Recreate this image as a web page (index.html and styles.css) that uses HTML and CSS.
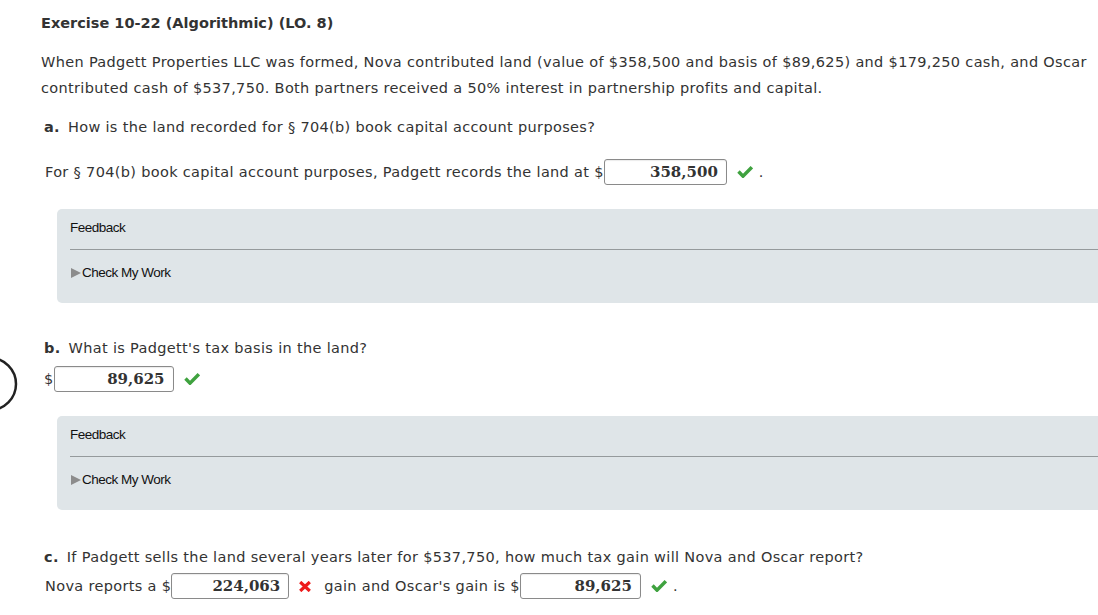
FILE: index.html
```html
<!DOCTYPE html>
<html>
<head>
<meta charset="utf-8">
<link rel="stylesheet" href="styles.css">
</head>
<body>
<svg class="ring" width="40" height="60" viewBox="0 0 40 60"><circle cx="-10" cy="30" r="26" fill="none" stroke="#222" stroke-width="2.5"/></svg>
<div class="page">
  <h1 class="title">Exercise 10-22 (Algorithmic) (LO. 8)</h1>
  <p class="intro">When Padgett Properties LLC was formed, Nova contributed land (value of $358,500 and basis of $89,625) and $179,250 cash, and Oscar contributed cash of $537,750. Both partners received a 50% interest in partnership profits and capital.</p>

  <div class="q q-a"><b class="lbl">a.</b>How is the land recorded for § 704(b) book capital account purposes?</div>
  <div class="row row-a">
    <span>For § 704(b) book capital account purposes, Padgett records the land at $</span><span class="box w123">358,500</span>
    <svg class="ok" width="16" height="12" viewBox="0 0 16 12"><path d="M1.5 5.5 L6 10.2 L14.8 1.2" fill="none" stroke="#3fa23f" stroke-width="3.4"/></svg><span class="dot">.</span>
  </div>
  <div class="fb">
    <div class="fb-title">Feedback</div>
    <div class="fb-rule"></div>
    <div class="fb-link"><span class="tri"></span>Check My Work</div>
  </div>

  <div class="q q-b"><b class="lbl">b.</b>What is Padgett's tax basis in the land?</div>
  <div class="row row-b">
    <span class="dollar">$</span><span class="box w120">89,625</span>
    <svg class="ok" width="16" height="12" viewBox="0 0 16 12"><path d="M1.5 5.5 L6 10.2 L14.8 1.2" fill="none" stroke="#3fa23f" stroke-width="3.4"/></svg>
  </div>
  <div class="fb">
    <div class="fb-title">Feedback</div>
    <div class="fb-rule"></div>
    <div class="fb-link"><span class="tri"></span>Check My Work</div>
  </div>

  <div class="q q-c"><b class="lbl">c.</b>If Padgett sells the land several years later for $537,750, how much tax gain will Nova and Oscar report?</div>
  <div class="row row-c">
    <span>Nova reports a $</span><span class="box w118">224,063</span>
    <svg class="bad" width="12" height="11" viewBox="0 0 12 11"><path d="M1.2 1 L10.8 10 M10.8 1 L1.2 10" fill="none" stroke="#ee1c1c" stroke-width="3.2"/></svg>
    <span class="gap">gain and Oscar's gain is $</span><span class="box w121">89,625</span>
    <svg class="ok" width="16" height="12" viewBox="0 0 16 12"><path d="M1.5 5.5 L6 10.2 L14.8 1.2" fill="none" stroke="#3fa23f" stroke-width="3.4"/></svg><span class="dot">.</span>
  </div>
</div>
</body>
</html>
```

FILE: styles.css
```css
html, body {
  margin: 0;
  padding: 0;
  background: #fff;
  overflow: hidden;
}
body {
  font-family: "DejaVu Sans", Verdana, sans-serif;
  font-size: 14.5px;
  letter-spacing: 0.33px;
  color: #333;
  position: relative;
}
.ring {
  position: absolute;
  left: 0;
  top: 354px;
}
.page {
  padding: 13px 0 0 41px;
}
.title {
  margin: 0;
  font-size: 14.5px;
  letter-spacing: 0;
  line-height: 20px;
  font-weight: bold;
  color: #333;
}
.intro {
  margin: 16px 0 0 0;
  line-height: 26px;
}
.q {
  line-height: 26px;
  margin-left: 3px;
}
.q-a { margin-top: 13px; }
.q-b { margin-top: 32px; }
.q-c { margin-top: 34px; }
.lbl {
  font-weight: bold;
  margin-right: 8px;
}
.row {
  display: flex;
  align-items: center;
  height: 26px;
  line-height: 26px;
  margin-left: 4px;
  white-space: nowrap;
}
.row-a { margin-top: 19px; }
.row-b { margin-top: 5px; margin-left: 3px; }
.row-c { margin-top: 3px; }
.box {
  box-sizing: border-box;
  height: 26px;
  border: 1px solid #8a8a8a;
  border-radius: 3px;
  box-shadow: inset 0 1px 1px rgba(0,0,0,0.08);
  text-align: right;
  padding-right: 8px;
  font-family: "DejaVu Serif", Georgia, serif;
  font-weight: bold;
  font-size: 15px;
  letter-spacing: 0;
  line-height: 24px;
  color: #333;
}
.w123 { width: 123px; }
.w120 { width: 120px; }
.w118 { width: 118px; }
.w121 { width: 121px; }
.ok {
  margin-left: 10px;
}
.bad {
  margin-left: 10px;
}
.gap {
  margin-left: 13px;
}
.dot {
  margin-left: 6px;
}
.fb {
  margin: 24px -10px 0 16px;
  height: 94px;
  box-sizing: border-box;
  background: #dfe5e8;
  border-radius: 5px 0 0 5px;
  padding: 10px 0 0 13px;
  font-family: "Liberation Sans", Arial, sans-serif;
  font-size: 13.5px;
  letter-spacing: -0.5px;
  color: #111;
}
.fb-title {
  line-height: 18px;
}
.fb-rule {
  margin-top: 12px;
  height: 1px;
  background: #959a9c;
}
.fb-link {
  margin-top: 14px;
  line-height: 18px;
  display: flex;
  align-items: center;
  margin-left: 1px;
}
.tri {
  width: 0;
  height: 0;
  border-top: 5px solid transparent;
  border-bottom: 5px solid transparent;
  border-left: 10px solid #8c8c8c;
  margin-right: 1px;
}
```
